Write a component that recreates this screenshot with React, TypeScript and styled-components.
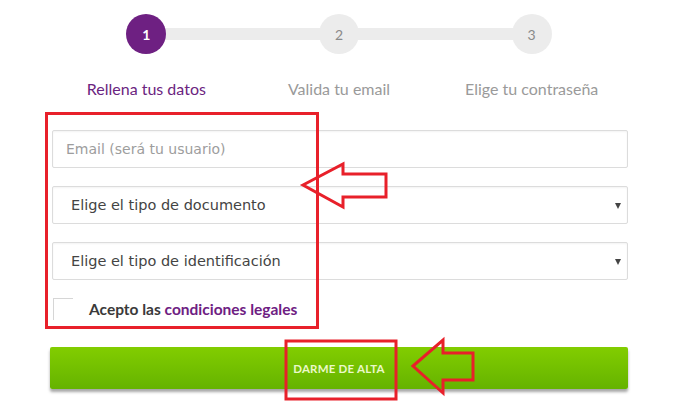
import React from "react";
import styled, { createGlobalStyle } from "styled-components";

const GlobalStyle = createGlobalStyle`
  html, body {
    margin: 0;
    padding: 0;
    background: #ffffff;
  }
  * {
    box-sizing: border-box;
  }
`;

const Page = styled.div`
  position: relative;
  width: 691px;
  height: 417px;
  padding: 14px 0 0 50px;
  overflow: hidden;
  font-family: Lato, "Open Sans", sans-serif;
`;

const Wrapper = styled.div`
  width: 578px;
`;

const Steps = styled.div`
  position: relative;
  display: grid;
  grid-template-columns: repeat(3, 1fr);

  &::before {
    content: "";
    position: absolute;
    left: 16.6%;
    right: 16.6%;
    top: 14px;
    height: 12px;
    background: #ececec;
  }
`;

const Step = styled.div`
  position: relative;
  display: flex;
  flex-direction: column;
  align-items: center;
`;

const Circle = styled.div<{ $active?: boolean }>`
  width: 40px;
  height: 40px;
  border-radius: 50%;
  display: flex;
  align-items: center;
  justify-content: center;
  background: ${(p) => (p.$active ? "#6e2082" : "#ececec")};
  color: ${(p) => (p.$active ? "#ffffff" : "#8a8a8a")};
  font-size: 14px;
  font-weight: ${(p) => (p.$active ? 700 : 400)};
`;

const StepLabel = styled.div<{ $active?: boolean }>`
  margin-top: 26px;
  line-height: 18px;
  font-size: 16px;
  color: ${(p) => (p.$active ? "#6b2480" : "#9a9a9a")};
`;

const Form = styled.div`
  margin-top: 32px;
  display: flex;
  flex-direction: column;
  gap: 18px;
`;

const Field = styled.div`
  position: relative;
  height: 38px;
  margin-left: 2px;
  border: 1px solid #dcdcdc;
  border-radius: 2px;
  box-shadow: inset 0 1px 2px rgba(0, 0, 0, 0.05);
  display: flex;
  align-items: center;
  font-family: "DejaVu Sans", Verdana, sans-serif;
  font-size: 14.5px;
`;

const Placeholder = styled.span`
  padding-left: 13px;
  color: #9d9d9d;
  font-size: 14px;
`;

const SelectText = styled.span`
  padding-left: 18px;
  color: #444444;
`;

const Caret = styled.span`
  position: absolute;
  right: 6px;
  top: 50%;
  margin-top: -2px;
  width: 0;
  height: 0;
  border-left: 3.5px solid transparent;
  border-right: 3.5px solid transparent;
  border-top: 6px solid #444444;
`;

const CheckRow = styled.div`
  display: flex;
  align-items: center;
  height: 22px;
  margin-left: 3px;
  gap: 16px;
`;

const Checkbox = styled.span`
  width: 20px;
  height: 22px;
  border-top: 1px solid #d6d6d6;
  border-left: 1px solid #d6d6d6;
  background: #ffffff;
`;

const CheckText = styled.span`
  font-size: 15.5px;
  font-weight: 700;
  color: #3a3a3a;
`;

const LegalLink = styled.span`
  color: #6e2082;
`;

const SubmitButton = styled.button`
  margin-top: 27px;
  width: 578px;
  height: 42px;
  border: none;
  border-radius: 2px;
  background: linear-gradient(#82cd00, #65b300);
  box-shadow: 0 3px 3px rgba(0, 0, 0, 0.35);
  color: #eaf8c8;
  font-family: Lato, "Open Sans", sans-serif;
  font-weight: 700;
  font-size: 11.5px;
  letter-spacing: 0.2px;
  cursor: pointer;
`;

const Annotations = styled.svg`
  position: absolute;
  left: 0;
  top: 0;
  pointer-events: none;
`;

const steps = [
  { n: "1", label: "Rellena tus datos", active: true },
  { n: "2", label: "Valida tu email" },
  { n: "3", label: "Elige tu contraseña" },
];

const App = () => {
  return (
    <>
      <GlobalStyle />
      <Page>
        <Wrapper>
          <Steps>
            {steps.map((s) => (
              <Step key={s.n}>
                <Circle $active={s.active}>{s.n}</Circle>
                <StepLabel $active={s.active}>{s.label}</StepLabel>
              </Step>
            ))}
          </Steps>
          <Form>
            <Field>
              <Placeholder>Email (será tu usuario)</Placeholder>
            </Field>
            <Field>
              <SelectText>Elige el tipo de documento</SelectText>
              <Caret />
            </Field>
            <Field>
              <SelectText>Elige el tipo de identificación</SelectText>
              <Caret />
            </Field>
            <CheckRow>
              <Checkbox />
              <CheckText>
                Acepto las <LegalLink>condiciones legales</LegalLink>
              </CheckText>
            </CheckRow>
          </Form>
          <SubmitButton>DARME DE ALTA</SubmitButton>
        </Wrapper>
        <Annotations width="691" height="417" viewBox="0 0 691 417">
          <g fill="none" stroke="#e8202a" strokeWidth="3">
            <rect x="46.5" y="113.5" width="271" height="214" />
            <rect x="286" y="341" width="110" height="58" />
            <polygon
              points="303,185 343,164 343,174 386,174 386,197 343,197 343,207"
              strokeLinejoin="miter"
            />
            <polygon
              points="413,366 443,340 443,353 473,353 473,380 443,380 443,393"
              strokeLinejoin="miter"
            />
          </g>
        </Annotations>
      </Page>
    </>
  );
};

export default App;
